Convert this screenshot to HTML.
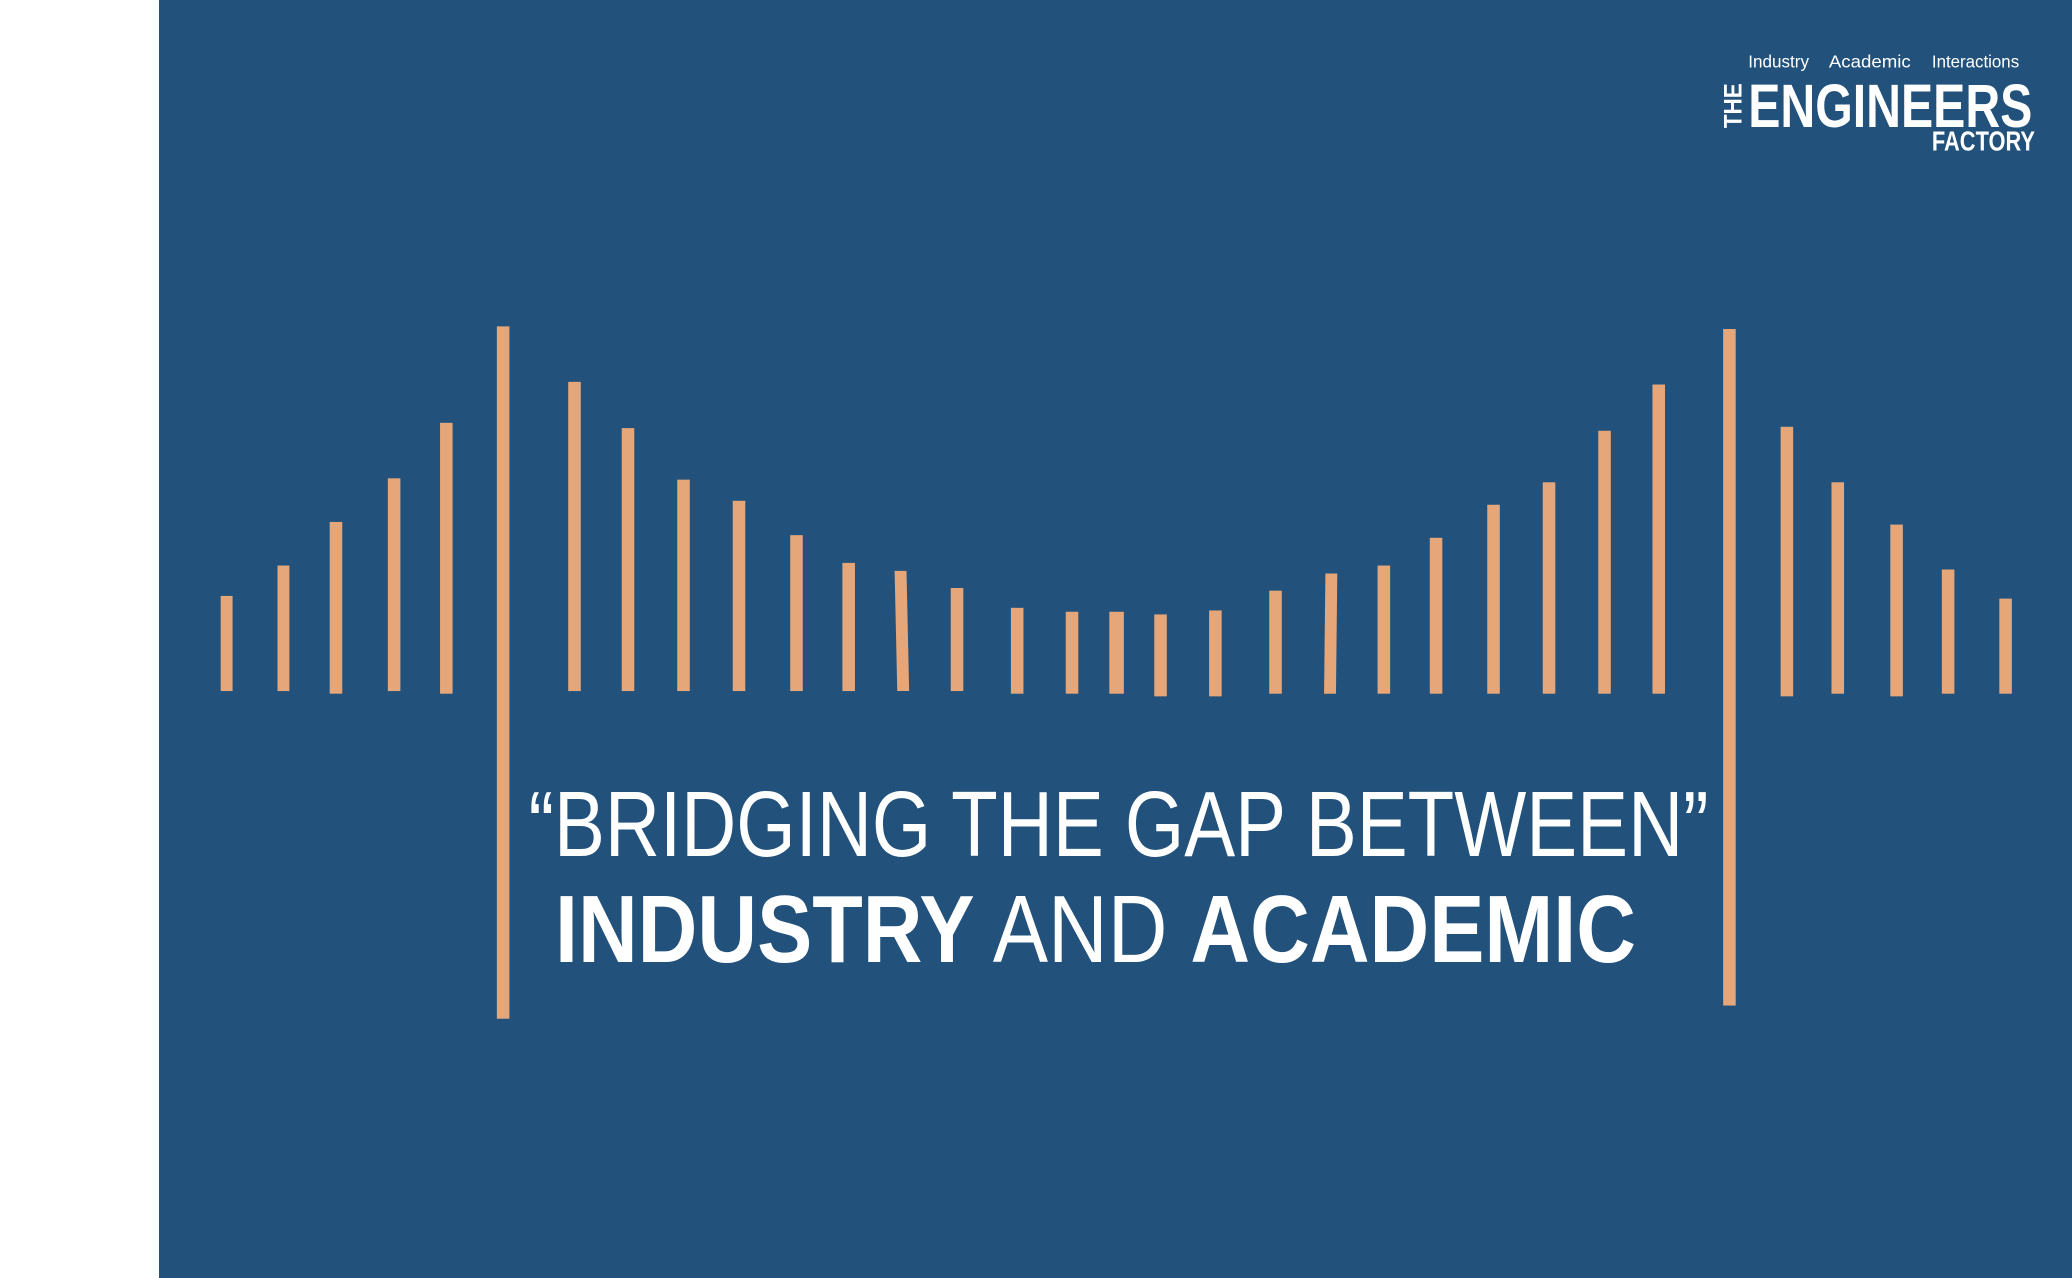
<!DOCTYPE html>
<html><head><meta charset="utf-8"><style>
html,body{margin:0;padding:0;background:#fff;width:2072px;height:1278px;overflow:hidden}
svg{display:block}
</style></head><body>
<svg width="2072" height="1278" viewBox="0 0 1568 967.2" preserveAspectRatio="none" xmlns="http://www.w3.org/2000/svg">
<rect x="0" y="0" width="1568" height="968" fill="#fff"/>
<rect x="120.3" y="0" width="1448" height="968" fill="#22527b"/>
<g fill="#e5a679">
<rect x="167" y="451" width="9" height="72"/>
<rect x="210" y="428" width="9" height="95"/>
<rect x="249.5" y="395" width="9.5" height="130"/>
<rect x="293.5" y="362" width="9.5" height="161"/>
<rect x="333" y="320" width="9.5" height="205"/>
<rect x="376" y="247" width="9.5" height="524"/>
<rect x="430" y="289" width="9.5" height="234"/>
<rect x="470.5" y="324" width="9.5" height="199"/>
<rect x="512.5" y="363" width="9.5" height="160"/>
<rect x="554.5" y="379" width="9.5" height="144"/>
<rect x="598" y="405" width="9.5" height="118"/>
<rect x="637.5" y="426" width="9.5" height="97"/>
<polygon points="677,432 686,432 688,523 679,523"/>
<rect x="719.5" y="445" width="9.5" height="78"/>
<rect x="765" y="460" width="9.5" height="65"/>
<rect x="806.5" y="463" width="9.5" height="62"/>
<rect x="839.5" y="463" width="11" height="62"/>
<rect x="873.5" y="465" width="9.5" height="62"/>
<rect x="915" y="462" width="9.5" height="65"/>
<rect x="960.5" y="447" width="9.5" height="78"/>
<polygon points="1003,434 1012,434 1011,525 1002,525"/>
<rect x="1042.5" y="428" width="9.5" height="97"/>
<rect x="1082" y="407" width="9.5" height="118"/>
<rect x="1125.5" y="382" width="9.5" height="143"/>
<rect x="1167.5" y="365" width="9.5" height="160"/>
<rect x="1209.5" y="326" width="9.5" height="199"/>
<rect x="1250.5" y="291" width="9.5" height="234"/>
<rect x="1304" y="249" width="9.5" height="512"/>
<rect x="1347.5" y="323" width="9.5" height="204"/>
<rect x="1386" y="365" width="9.5" height="160"/>
<rect x="1430.5" y="397" width="9.5" height="130"/>
<rect x="1469.5" y="431" width="9.5" height="94"/>
<rect x="1513" y="453" width="9.5" height="72"/>
</g>
<g fill="#fff" font-family="'Liberation Sans', sans-serif">
<text x="400" y="648" font-size="70" textLength="893" lengthAdjust="spacingAndGlyphs">“BRIDGING THE GAP BETWEEN”</text>
<text x="420" y="728" font-size="72" textLength="818" lengthAdjust="spacingAndGlyphs"><tspan font-weight="bold">INDUSTRY</tspan> AND <tspan font-weight="bold">ACADEMIC</tspan></text>
<text x="1323" y="51" font-size="13.5" textLength="46" lengthAdjust="spacingAndGlyphs">Industry</text>
<text x="1384" y="51" font-size="13.5" textLength="62" lengthAdjust="spacingAndGlyphs">Academic</text>
<text x="1462" y="51" font-size="13.5" textLength="66" lengthAdjust="spacingAndGlyphs">Interactions</text>
<text x="1323" y="96" font-size="46" font-weight="bold" textLength="215" lengthAdjust="spacingAndGlyphs">ENGINEERS</text>
<text transform="translate(1318,97) rotate(-90)" font-size="19" font-weight="bold" textLength="34" lengthAdjust="spacingAndGlyphs">THE</text>
<text x="1462" y="114" font-size="21" font-weight="bold" textLength="78" lengthAdjust="spacingAndGlyphs">FACTORY</text>
</g>
</svg>
</body></html>
